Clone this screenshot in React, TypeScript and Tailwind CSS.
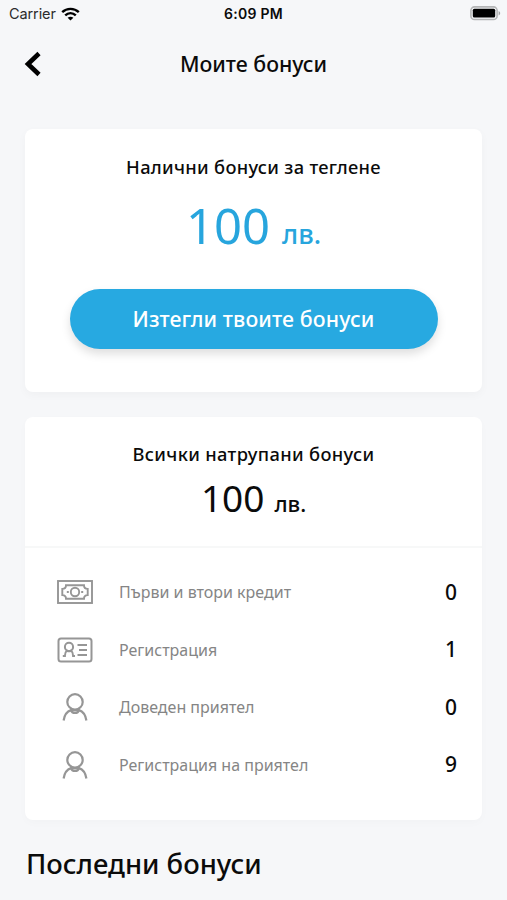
import React from 'react';

function WifiIcon() {
  return (
    <svg width="19" height="14" viewBox="0 0 19 14" fill="none" stroke="#000" strokeWidth="2.4">
      <path d="M1.2 5.1C5.8 0.8 13.2 0.8 17.8 5.1" />
      <path d="M4.2 8.4C7.3 5.5 11.7 5.5 14.8 8.4" />
      <path d="M6.6 10.8C8.3 9.3 10.7 9.3 12.4 10.8L9.5 13.6Z" fill="#000" stroke="none" />
    </svg>
  );
}

function BatteryIcon() {
  return (
    <svg width="31" height="15" viewBox="0 0 31 15" fill="none">
      <rect x="0.9" y="0.9" width="26.2" height="12.6" rx="3.6" stroke="#b4b5b6" strokeWidth="1.6" />
      <rect x="2.8" y="2.8" width="22.4" height="8.8" rx="1.5" fill="#000" />
      <path d="M28.6 5C30.7 5.8 30.7 8.6 28.6 9.4Z" fill="#a2a3a4" />
    </svg>
  );
}

function BanknoteIcon() {
  return (
    <svg width="36" height="24" viewBox="0 0 36 24" fill="none" stroke="#969696" strokeWidth="1.9">
      <rect x="1" y="1" width="34" height="22" />
      <path d="M9 5.3H27C27 7.4 28.6 8.9 30.7 8.9V15.1C28.6 15.1 27 16.6 27 18.7H9C9 16.6 7.4 15.1 5.3 15.1V8.9C7.4 8.9 9 7.4 9 5.3Z" />
      <circle cx="18" cy="12" r="4.2" />
      <path d="M9.8 12H11.8M24.2 12H26.2" />
    </svg>
  );
}

function IdCardIcon() {
  return (
    <svg width="36" height="26" viewBox="0 0 36 26" fill="none" stroke="#969696" strokeWidth="2">
      <rect x="1.5" y="1.5" width="33" height="23" rx="2.5" />
      <circle cx="12" cy="9.9" r="4.1" />
      <path d="M5.8 18.9H7.9C7.9 16.2 8.8 14.6 10 13.6C11.2 14.4 12.8 14.4 14 13.6C15.2 14.6 16.1 16.2 16.1 18.9H18" />
      <path d="M20.5 8.1H30M22 13H30M20.5 17.9H30" />
    </svg>
  );
}

function PersonIcon() {
  return (
    <svg width="26" height="28" viewBox="0 0 26 28" fill="none" stroke="#969696" strokeWidth="2.2">
      <circle cx="13" cy="8.9" r="7.7" />
      <path d="M1.6 27.5C2.4 22.2 5 18.4 9 17.1C10 20.9 16 20.9 17 17.1C21 18.4 23.6 22.2 24.4 27.5" />
      <path d="M8.6 17.2H17.4" />
    </svg>
  );
}

const rows = [
  { label: 'Първи и втори кредит', value: 0, icon: BanknoteIcon },
  { label: 'Регистрация', value: 1, icon: IdCardIcon },
  { label: 'Доведен приятел', value: 0, icon: PersonIcon },
  { label: 'Регистрация на приятел', value: 9, icon: PersonIcon },
];

export default function App() {
  return (
    <div className="h-[900px] w-[507px] overflow-hidden bg-[#f6f7f9] font-['Noto_Sans',sans-serif] text-[#0b0b0b]">
      <div className="grid h-7 grid-cols-3 items-center pr-[6px] pl-[9px] font-['Inter',sans-serif]">
        <div className="-mt-px flex items-center gap-[5px]">
          <span className="text-[14.5px] tracking-[-0.1px] text-[#2b2b2b]">Carrier</span>
          <WifiIcon />
        </div>
        <span className="-mt-0.5 mr-[3px] text-center text-[14px] font-semibold tracking-[0.3px]">6:09 PM</span>
        <div className="-mt-0.5 flex justify-end">
          <BatteryIcon />
        </div>
      </div>

      <header className="grid h-[72px] grid-cols-[60px_1fr_60px] items-center">
        <button className="flex pl-6" aria-label="Назад">
          <svg width="18" height="26" viewBox="0 0 18 26" fill="none" stroke="#000" strokeWidth="4.6">
            <path d="M15 2.5L4 13L15 23.5" />
          </svg>
        </button>
        <h1 className="text-center text-[21.3px] font-medium">Моите бонуси</h1>
      </header>

      <main className="px-[25px] pt-[29px]">
        <section className="flex h-[263px] flex-col items-center rounded-lg bg-white shadow-[0_3px_10px_rgba(0,0,0,0.03)]">
          <h2 className="mt-[25px] text-[18.3px] leading-[26px] font-medium tracking-[0.3px]">Налични бонуси за теглене</h2>
          <p className="mt-[15px] flex h-[60px] items-baseline gap-[12px] leading-[60px] text-[#27a5dd]">
            <span className="text-[49px]">100</span>
            <span className="text-[27px] font-medium">лв.</span>
          </p>
          <button className="mt-[34px] h-[60px] w-[368px] rounded-full bg-[#27a9e1] text-[21.3px] font-medium tracking-[0.12px] text-white shadow-[0_5px_10px_rgba(0,0,0,0.13)]">
            Изтегли твоите бонуси
          </button>
        </section>

        <section className="mt-[25px] h-[403px] rounded-lg bg-white shadow-[0_3px_10px_rgba(0,0,0,0.02)]">
          <div className="flex h-[131px] flex-col items-center border-b-2 border-[#f7f8f8]">
            <h2 className="mt-[24px] text-[18.3px] leading-[26px] font-medium tracking-[0.35px]">Всички натрупани бонуси</h2>
            <p className="mt-[6px] flex h-[50px] items-baseline gap-[10px] leading-[50px]">
              <span className="text-[37px]">100</span>
              <span className="text-[22px] font-medium">лв.</span>
            </p>
          </div>
          <ul className="pt-[15.5px]">
            {rows.map((row) => (
              <li key={row.label} className="flex h-[57.5px] items-center pr-[25px] pl-[32px]">
                <span className="flex w-9 justify-center">
                  <row.icon />
                </span>
                <span className="ml-[26px] flex-1 text-[16px] text-[#858585]">{row.label}</span>
                <span className="text-[21px] font-medium">{row.value}</span>
              </li>
            ))}
          </ul>
        </section>

        <h2 className="mt-[26px] ml-px text-[27.4px] leading-[36px] font-medium">Последни бонуси</h2>
      </main>
    </div>
  );
}
